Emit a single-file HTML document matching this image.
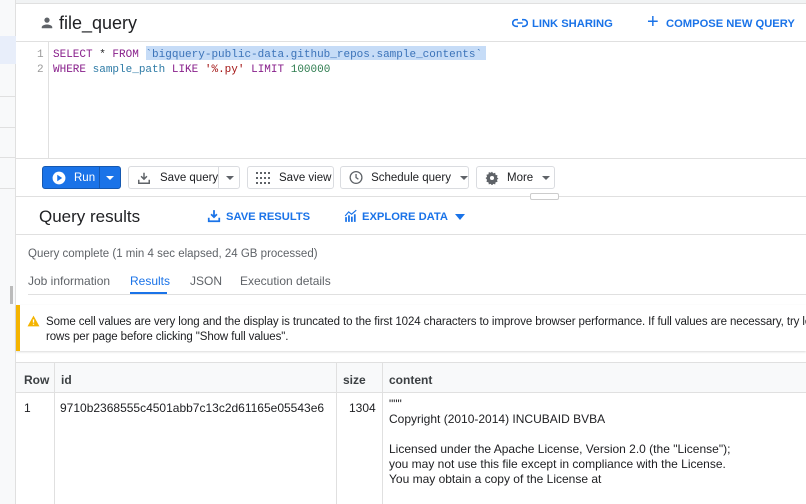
<!DOCTYPE html>
<html><head><style>
*{margin:0;padding:0;box-sizing:border-box}
body{width:806px;height:504px;overflow:hidden;background:#fff;font-family:"Liberation Sans",Arial,sans-serif;color:#202124;position:relative}
.abs{position:absolute;white-space:nowrap}
.mono{font-family:"Liberation Mono",monospace;font-size:11px}
.btn{position:absolute;top:166px;height:23px;border:1px solid #dadce0;border-radius:3px;background:#fff;font-size:11.5px;display:flex;align-items:center;color:#202124;white-space:nowrap}
.blue{color:#1a73e8;font-weight:bold;font-size:11.2px}
.tri{display:inline-block;width:0;height:0;border-left:4px solid transparent;border-right:4px solid transparent;border-top:4px solid #5f6368}
</style></head><body>
<div class="abs" style="left:0;top:0;width:16px;height:504px;background:#f8f9fa;border-right:1px solid #e0e0e0"></div>
<div class="abs" style="left:0;top:36px;width:16px;height:28px;background:#e8eefa"></div>
<div class="abs" style="left:0;top:96px;width:16px;height:1px;background:#e0e0e0"></div>
<div class="abs" style="left:0;top:127px;width:16px;height:1px;background:#e0e0e0"></div>
<div class="abs" style="left:0;top:157px;width:16px;height:1px;background:#e0e0e0"></div>
<div class="abs" style="left:0;top:188px;width:16px;height:1px;background:#e0e0e0"></div>
<div class="abs" style="left:10px;top:286px;width:3px;height:18px;background:#bbb"></div>
<div class="abs" style="left:16px;top:0;width:790px;height:4px;background:#f1f3f4;border-bottom:1px solid #e0e0e0"></div>
<svg class="abs" style="left:40px;top:16px" width="14" height="14" viewBox="0 0 24 24"><circle cx="12" cy="7" r="4.5" fill="#5f6368"/><path d="M3 21v-2c0-3 6-4.5 9-4.5s9 1.5 9 4.5v2z" fill="#5f6368"/></svg>
<div class="abs" style="left:59px;top:13px;font-size:18px">file_query</div>
<svg class="abs" style="left:512px;top:17px" width="16" height="12" viewBox="0 0 24 16"><path d="M9 3H6a5 5 0 0 0 0 10h3M15 3h3a5 5 0 0 1 0 10h-3M8 8h8" stroke="#1a73e8" stroke-width="2.4" fill="none"/></svg>
<div class="abs blue" style="left:532px;top:18px">LINK SHARING</div>
<div class="abs" style="left:647px;top:11px;color:#1a73e8;font-size:20px">+</div>
<div class="abs blue" style="left:666px;top:18px">COMPOSE NEW QUERY</div>
<div class="abs" style="left:16px;top:41px;width:790px;height:1px;background:#e0e0e0"></div>
<div class="abs" style="left:48px;top:42px;width:1px;height:116px;background:#e0e0e0"></div>
<div class="abs mono" style="left:37px;top:48px;color:#999;line-height:15px">1<br>2</div>
<div class="abs" style="left:146px;top:46px;width:340px;height:14px;background:#c6dcf7"></div>
<div class="abs mono" style="left:53px;top:48px;line-height:15px;white-space:pre"><span style="color:#881f8b">SELECT</span> * <span style="color:#881f8b">FROM</span> <span style="color:#3b73b9">`bigquery-public-data.github_repos.sample_contents`</span>
<span style="color:#881f8b">WHERE</span> <span style="color:#2e7ba6">sample_path</span> <span style="color:#881f8b">LIKE</span> <span style="color:#a31515">'%.py'</span> <span style="color:#881f8b">LIMIT</span> <span style="color:#2e7d4f">100000</span></div>
<div class="abs" style="left:16px;top:158px;width:790px;height:1px;background:#e0e0e0"></div>
<div class="btn" style="left:42px;width:79px;background:#1a73e8;border-color:#1558b0"><svg style="margin-left:9px" width="14" height="14" viewBox="0 0 24 24"><circle cx="12" cy="12" r="11" fill="#fff"/><path d="M9 6.5v11l8.5-5.5z" fill="#1a73e8"/></svg><span style="color:#fff;margin-left:8px">Run</span><span style="position:absolute;left:56px;top:0;width:1px;height:21px;background:#1558b0"></span><span class="tri" style="position:absolute;left:63px;top:9px;border-top-color:#fff"></span></div>
<div class="btn" style="left:128px;width:112px"><svg style="margin-left:8px" width="14" height="14" viewBox="0 0 24 24"><path d="M12 3v11M7 9l5 5 5-5M3 15v6h18v-6" stroke="#5f6368" stroke-width="2.5" fill="none"/></svg><span style="margin-left:9px">Save query</span><span style="position:absolute;left:89px;top:0;width:1px;height:21px;background:#dadce0"></span><span class="tri" style="position:absolute;left:97px;top:9px"></span></div>
<div class="btn" style="left:247px;width:87px"><svg style="margin-left:8px" width="14" height="14" viewBox="0 0 14 14" fill="#5f6368"><rect x="0" y="1" width="2" height="2"/><rect x="4" y="1" width="2" height="2"/><rect x="8" y="1" width="2" height="2"/><rect x="12" y="1" width="2" height="2"/><rect x="0" y="6" width="2" height="2"/><rect x="4" y="6" width="2" height="2"/><rect x="8" y="6" width="2" height="2"/><rect x="12" y="6" width="2" height="2"/><rect x="0" y="11" width="2" height="2"/><rect x="4" y="11" width="2" height="2"/><rect x="8" y="11" width="2" height="2"/><rect x="12" y="11" width="2" height="2"/></svg><span style="margin-left:9px">Save view</span></div>
<div class="btn" style="left:340px;width:129px"><svg style="margin-left:8px" width="15" height="15" viewBox="0 0 24 24"><circle cx="12" cy="12" r="10" stroke="#5f6368" stroke-width="2.2" fill="none"/><path d="M12 6v6l4 3" stroke="#5f6368" stroke-width="2.2" fill="none"/></svg><span style="margin-left:8px">Schedule query</span><span class="tri" style="margin-left:9px"></span></div>
<div class="btn" style="left:476px;width:79px"><svg style="margin-left:8px" width="14" height="14" viewBox="0 0 24 24"><path d="M12 1l2 3 3.5-1 .5 3.5 3.5 1-1 3.5 2.5 2-2.5 2 1 3.5-3.5 1-.5 3.5-3.5-1-2 3-2-3-3.5 1-.5-3.5-3.5-1 1-3.5L1 12l2.5-2-1-3.5 3.5-1L6.5 2l3.5 1z" fill="#5f6368"/><circle cx="12" cy="12" r="3.5" fill="#fff"/></svg><span style="margin-left:8px">More</span><span class="tri" style="margin-left:9px"></span></div>
<div class="abs" style="left:16px;top:196px;width:790px;height:1px;background:#e0e0e0"></div>
<div class="abs" style="left:530px;top:193px;width:29px;height:7px;border:1px solid #ccc;border-radius:2px;background:#fff"></div>
<div class="abs" style="left:39px;top:207px;font-size:17px">Query results</div>
<svg class="abs" style="left:207px;top:209px" width="14" height="14" viewBox="0 0 24 24"><path d="M12 2v12M7 9l5 5 5-5M3 15v6h18v-6" stroke="#1a73e8" stroke-width="3" fill="none"/></svg>
<div class="abs blue" style="left:226px;top:211px">SAVE RESULTS</div>
<svg class="abs" style="left:344px;top:209px" width="14" height="14" viewBox="0 0 24 24"><path d="M2 22V14h3v8zM7 22V11h3v11zM12 22V13h3v9zM17 22V9h3v13z" fill="#1a73e8"/><path d="M2 12l6-7 5 4 8-7" stroke="#1a73e8" stroke-width="2" fill="none"/></svg>
<div class="abs blue" style="left:362px;top:211px">EXPLORE DATA</div>
<div class="abs tri" style="left:455px;top:214px;border-left-width:5px;border-right-width:5px;border-top:6px solid #1a73e8"></div>
<div class="abs" style="left:16px;top:234px;width:790px;height:1px;background:#e0e0e0"></div>
<div class="abs" style="left:28px;top:248px;font-size:11.5px;color:#5f6368">Query complete (1 min 4 sec elapsed, 24 GB processed)</div>
<div class="abs" style="left:28px;top:274px;font-size:12px;color:#5f6368">Job information</div>
<div class="abs" style="left:130px;top:274px;font-size:12px;color:#1a73e8">Results</div>
<div class="abs" style="left:130px;top:292px;width:37px;height:2px;background:#1a73e8"></div>
<div class="abs" style="left:190px;top:274px;font-size:12px;color:#5f6368">JSON</div>
<div class="abs" style="left:240px;top:274px;font-size:12px;color:#5f6368">Execution details</div>
<div class="abs" style="left:28px;top:294px;width:778px;height:1px;background:#e0e0e0"></div>
<div class="abs" style="left:16px;top:305px;width:790px;height:46px;background:#fff;border-left:4px solid #f4b400;box-shadow:0 1px 2px rgba(0,0,0,.15)"></div>
<svg class="abs" style="left:27px;top:315px" width="13" height="12" viewBox="0 0 24 22"><path d="M12 1L23 21H1z" fill="#f4b400"/><path d="M12 8v6M12 16v2" stroke="#fff" stroke-width="2.4"/></svg>
<div class="abs" style="left:46px;top:315px;font-size:11.5px;line-height:15px;letter-spacing:-0.1px">Some cell values are very long and the display is truncated to the first 1024 characters to improve browser performance. If full values are necessary, try lo<br>rows per page before clicking "Show full values".</div>
<div class="abs" style="left:16px;top:362px;width:790px;height:1px;background:#e0e0e0"></div>
<div class="abs" style="left:16px;top:363px;width:790px;height:30px;background:#f8f9fa;border-bottom:1px solid #e0e0e0"></div>
<div class="abs" style="left:54px;top:363px;width:1px;height:141px;background:#e0e0e0"></div>
<div class="abs" style="left:336px;top:363px;width:1px;height:141px;background:#e0e0e0"></div>
<div class="abs" style="left:382px;top:363px;width:1px;height:141px;background:#e0e0e0"></div>
<div class="abs" style="left:24px;top:373px;font-size:12px;font-weight:bold;color:#3c4043">Row</div>
<div class="abs" style="left:61px;top:373px;font-size:12px;font-weight:bold;color:#3c4043">id</div>
<div class="abs" style="left:343px;top:373px;font-size:12px;font-weight:bold;color:#3c4043">size</div>
<div class="abs" style="left:389px;top:373px;font-size:12px;font-weight:bold;color:#3c4043">content</div>
<div class="abs" style="left:24px;top:401px;font-size:12px">1</div>
<div class="abs" style="left:60px;top:401px;font-size:12px">9710b2368555c4501abb7c13c2d61165e05543e6</div>
<div class="abs" style="left:349px;top:401px;font-size:12px">1304</div>
<div class="abs" style="left:389px;top:397px;font-size:12px;line-height:15px">"""<br>Copyright (2010-2014) INCUBAID BVBA<br><br>Licensed under the Apache License, Version 2.0 (the "License");<br>you may not use this file except in compliance with the License.<br>You may obtain a copy of the License at</div>
</body></html>
